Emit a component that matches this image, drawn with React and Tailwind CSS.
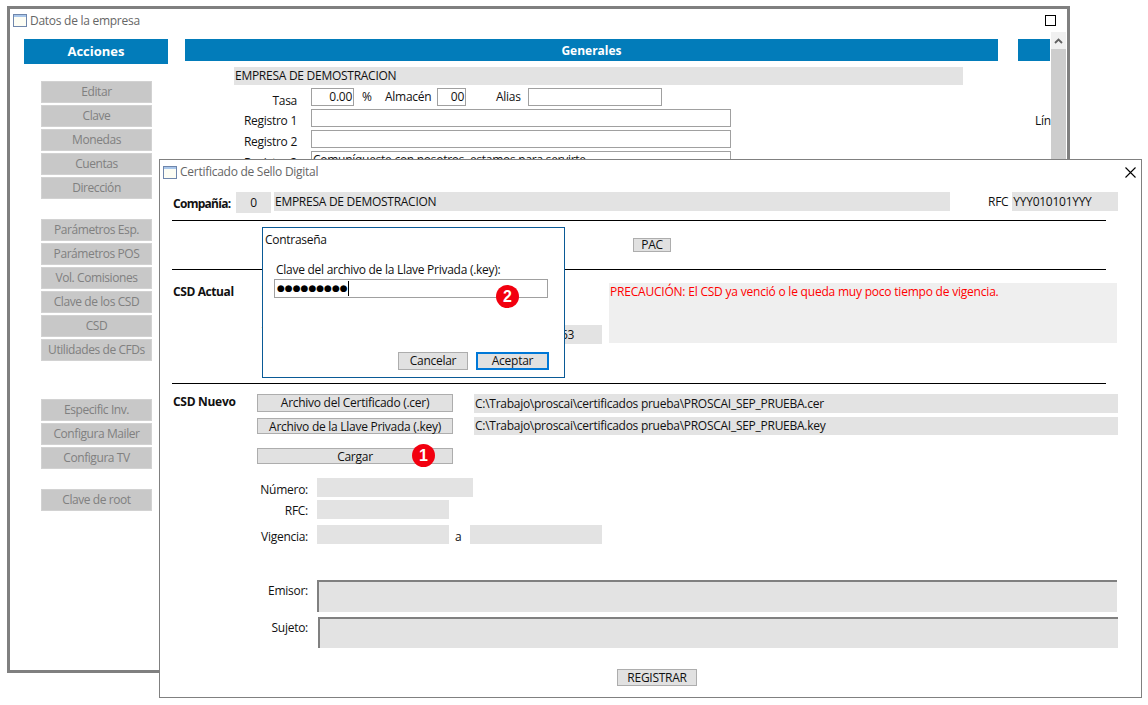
// App.jsx
import React from "react";

const ACTIONS = [
	{ label: "Editar", top: "mt-[10px]" },
	{ label: "Clave", top: "mt-[2px]" },
	{ label: "Monedas", top: "mt-[2px]" },
	{ label: "Cuentas", top: "mt-[2px]" },
	{ label: "Dirección", top: "mt-[2px]" },
	{ label: "Parámetros Esp.", top: "mt-[20px]" },
	{ label: "Parámetros POS", top: "mt-[2px]" },
	{ label: "Vol. Comisiones", top: "mt-[2px]" },
	{ label: "Clave de los CSD", top: "mt-[2px]" },
	{ label: "CSD", top: "mt-[2px]" },
	{ label: "Utilidades de CFDs", top: "mt-[2px]" },
	{ label: "Especific Inv.", top: "mt-[38px]" },
	{ label: "Configura Mailer", top: "mt-[2px]" },
	{ label: "Configura TV", top: "mt-[2px]" },
	{ label: "Clave de root", top: "mt-[20px]" },
];

function WinIcon() {
	return (
		<span className="block w-[14px] h-[13px] shrink-0 border border-[#6f86ab] bg-[#fdfdf4]">
			<span className="block h-[2px] bg-[#a9c6ea]" />
		</span>
	);
}

function Badge({ n, className }) {
	return (
		<span
			className={
				"absolute w-[23px] h-[23px] rounded-full bg-[#f2000f] text-white flex items-center justify-center font-['Liberation_Sans',sans-serif] font-bold text-[16px] leading-none tracking-normal " +
				className
			}
		>
			{n}
		</span>
	);
}

function GrayButton({ className, children }) {
	return (
		<div
			className={
				"flex items-center justify-center bg-[#e1e1e1] border border-[#adadad] text-[#111] leading-none " +
				className
			}
		>
			{children}
		</div>
	);
}

function Label({ className, children }) {
	return <div className={"text-right text-[#111] leading-none " + className}>{children}</div>;
}

export default function App() {
	return (
		<div className="relative w-[1148px] h-[705px] overflow-hidden bg-white text-[12px] font-['Open_Sans',sans-serif] tracking-[-0.27px]">
			{/* ventana de atras */}
			<div className="absolute left-[7px] top-[6px] w-[1063px] h-[667px] border-[3px] border-[#808080] bg-white overflow-hidden">
				<div className="h-[23px] flex items-center pl-[3px] pr-[11px] text-[#666]">
					<WinIcon />
					<span className="ml-[3px]">Datos de la empresa</span>
					<span className="ml-auto w-[11px] h-[11px] border border-black" />
				</div>
				<div className="flex">
					<div className="ml-[14px] w-[144px] mt-[7px]">
						<div className="h-[25px] bg-[#027cba] text-white font-bold text-[13px] flex items-center justify-center tracking-normal">
							Acciones
						</div>
						<div className="ml-[17px] w-[111px] mt-[7px] flex flex-col tracking-[-0.42px]">
							{ACTIONS.map((a) => (
								<div
									key={a.label}
									className={
										"h-[22px] bg-[#c8c8c8] border border-[#d2d2d2] text-[#808080] flex items-center justify-center whitespace-nowrap " +
										a.top
									}
								>
									{a.label}
								</div>
							))}
						</div>
					</div>

					<div className="ml-[17px] w-[813px] mt-[7px]">
						<div className="h-[22px] pt-[2px] bg-[#027cba] text-white font-bold text-[12px] flex items-center justify-center tracking-normal">
							Generales
						</div>
						<div className="mt-[6px] ml-[49px] w-[729px] h-[18px] bg-[#e3e3e3] text-[#111] flex items-center pl-[1px]">
							EMPRESA DE DEMOSTRACION
						</div>
						<div className="mt-[3px] flex items-center h-[18px] text-[#111]">
							<Label className="w-[112px] pt-[7px]">Tasa</Label>
							<div className="ml-[14px] w-[43px] h-[18px] border border-[#a0a0a0] flex items-center justify-end pr-[1px]">0.00</div>
							<span className="ml-[8px] w-[23px]">%</span>
							<span className="w-[47px]">Almacén</span>
							<div className="ml-[5px] w-[29px] h-[18px] border border-[#a0a0a0] flex items-center justify-end pr-[1px]">00</div>
							<span className="ml-[30px] w-[26px]">Alias</span>
							<div className="ml-[6px] w-[134px] h-[18px] border border-[#a0a0a0]" />
						</div>
						<div className="mt-[3px] flex items-center h-[18px]">
							<Label className="w-[112px] pt-[6px]">Registro 1</Label>
							<div className="ml-[14px] w-[420px] h-[18px] border border-[#a0a0a0]" />
						</div>
						<div className="mt-[3px] flex items-center h-[18px]">
							<Label className="w-[112px] pt-[6px]">Registro 2</Label>
							<div className="ml-[14px] w-[420px] h-[18px] border border-[#a0a0a0]" />
						</div>
						<div className="mt-[3px] flex items-center h-[18px]">
							<Label className="w-[112px] pt-[6px]">Registro 3</Label>
							<div className="ml-[14px] w-[420px] h-[18px] border border-[#a0a0a0] flex items-center pl-[1px] text-[#111]">
								Comuníqueste con nosotros, estamos para servirte
							</div>
						</div>
					</div>

					<div className="ml-[20px] w-[32px] mt-[7px]">
						<div className="h-[22px] bg-[#027cba]" />
						<div className="mt-[51px] text-[#111] pl-[17px] whitespace-nowrap">Lín</div>
					</div>

					<div className="ml-[1px] w-[15px] h-[640px] bg-[#cdcdcd]">
						<div className="h-[17px] bg-[#f0f0f0] flex items-center justify-center">
							<svg width="9" height="6" viewBox="0 0 9 6" fill="none">
								<path d="M1 5 L4.5 1.5 L8 5" stroke="#606060" strokeWidth="1.8" />
							</svg>
						</div>
					</div>
				</div>
			</div>

			{/* certificado */}
			<div className="absolute left-[159px] top-[159px] w-[983px] h-[539px] border border-[#808080] bg-white">
				<div className="h-[24px] flex items-center pl-[3px] pr-[5px] text-[#666]">
					<WinIcon />
					<span className="ml-[3px]">Certificado de Sello Digital</span>
					<svg className="ml-auto" width="11" height="11" viewBox="0 0 11 11" fill="none">
						<path d="M0.5 0.5 L10.5 10.5 M10.5 0.5 L0.5 10.5" stroke="#000" strokeWidth="1.1" />
					</svg>
				</div>

				<div className="mt-[8px] flex items-start h-[21px] text-[#111]">
					<div className="ml-[13px] w-[63px] font-bold h-[21px] pt-[2px] flex items-center tracking-[-0.72px]">Compañía:</div>
					<div className="w-[35px] h-[21px] bg-[#e3e3e3] flex items-center justify-center">0</div>
					<div className="ml-[3px] w-[676px] h-[19px] bg-[#e3e3e3] flex items-center pl-[1px]">EMPRESA DE DEMOSTRACION</div>
					<div className="ml-[38px] h-[19px] flex items-center">RFC</div>
					<div className="ml-[4px] w-[106px] h-[19px] bg-[#e3e3e3] flex items-center pl-[1px]">YYY010101YYY</div>
				</div>
				<div className="mt-[7px] ml-[12px] w-[934px] h-[1px] bg-black" />

				<div className="mt-[17px] ml-[473px]">
					<GrayButton className="w-[38px] h-[14px]">PAC</GrayButton>
				</div>
				<div className="mt-[17px] ml-[12px] w-[934px] h-[1px] bg-black" />

				<div className="h-[113px] flex text-[#111]">
					<div className="ml-[13px] mt-[16px] w-[87px] font-bold leading-none tracking-[-0.4px]">CSD Actual</div>
					<div className="w-[49px] mt-[15px] flex flex-col">
						<Label>Número:</Label>
						<Label className="mt-[29px]">Vigencia:</Label>
					</div>
					<div className="ml-[161px] mt-[55px] w-[132px] h-[19px] bg-[#e3e3e3] flex items-center pl-[91px]">63</div>
					<div className="ml-[7px] mt-[13px] w-[508px] h-[60px] bg-[#efefef] text-[#f00] pl-[1px] pt-[2px] leading-[14px] tracking-[-0.21px]">
						PRECAUCIÓN: El CSD ya venció o le queda muy poco tiempo de vigencia.
					</div>
				</div>
				<div className="ml-[12px] w-[934px] h-[1px] bg-black" />

				<div className="mt-[10px] flex items-start text-[#111]">
					<div className="ml-[13px] mt-[1px] w-[84px] font-bold leading-[14px] tracking-[-0.3px]">CSD Nuevo</div>
					<div className="w-[196px]">
						<GrayButton className="h-[18px]">Archivo del Certificado (.cer)</GrayButton>
						<GrayButton className="mt-[6px] h-[16px] pt-[1px]">Archivo de la Llave Privada (.key)</GrayButton>
						<GrayButton className="mt-[14px] h-[16px] pt-[1px]">Cargar</GrayButton>
					</div>
					<div className="ml-[21px] w-[644px]">
						<div className="h-[19px] bg-[#e3e3e3] flex items-center pl-[1px]">C:\Trabajo\proscai\certificados prueba\PROSCAI_SEP_PRUEBA.cer</div>
						<div className="mt-[4px] h-[18px] bg-[#e3e3e3] flex items-center pl-[1px]">C:\Trabajo\proscai\certificados prueba\PROSCAI_SEP_PRUEBA.key</div>
					</div>
				</div>

				<div className="mt-[14px] flex items-center h-[19px] text-[#111]">
					<Label className="w-[148px] pt-[4px]">Número:</Label>
					<div className="ml-[9px] w-[156px] h-[19px] bg-[#e3e3e3]" />
				</div>
				<div className="mt-[3px] flex items-center h-[19px] text-[#111]">
					<Label className="w-[148px] pt-[2px]">RFC:</Label>
					<div className="ml-[9px] w-[132px] h-[19px] bg-[#e3e3e3]" />
				</div>
				<div className="mt-[6px] flex items-center h-[19px] text-[#111]">
					<Label className="w-[148px] pt-[4px]">Vigencia:</Label>
					<div className="ml-[9px] w-[132px] h-[19px] bg-[#e3e3e3]" />
					<span className="ml-[6px] w-[15px] pt-[4px]">a</span>
					<div className="w-[132px] h-[19px] bg-[#e3e3e3]" />
				</div>

				<div className="mt-[36px] flex items-start text-[#111]">
					<Label className="w-[148px] mt-[5px]">Emisor:</Label>
					<div className="ml-[9px] w-[800px] h-[32px] bg-[#e3e3e3] border-t-2 border-l-2 border-[#808080]" />
				</div>
				<div className="mt-[5px] flex items-start text-[#111]">
					<Label className="w-[148px] mt-[5px]">Sujeto:</Label>
					<div className="ml-[10px] w-[800px] h-[31px] bg-[#e3e3e3] border-t-2 border-l-2 border-[#808080]" />
				</div>

				<div className="mt-[21px] ml-[457px]">
					<GrayButton className="w-[80px] h-[17px]">REGISTRAR</GrayButton>
				</div>
			</div>

			{/* contraseña */}
			<div className="absolute left-[262px] top-[227px] w-[303px] h-[151px] border border-[#0a5a96] bg-white text-[#111]">
				<div className="ml-[2px] mt-[5px] leading-[14px]">Contraseña</div>
				<div className="ml-[13px] mt-[16px] leading-[14px]">Clave del archivo de la Llave Privada (.key):</div>
				<div className="ml-[11px] mt-[2px] w-[274px] h-[19px] border border-[#a0a0a0] flex items-center pl-[2px]">
					<span className="font-['DejaVu_Sans',sans-serif] text-[9px] leading-none tracking-normal border-r border-black text-black h-[15px] flex items-center">
						●●●●●●●●●
					</span>
				</div>
				<div className="mt-[54px] ml-[135px] flex gap-[8px]">
					<GrayButton className="w-[70px] h-[18px]">Cancelar</GrayButton>
					<GrayButton className="w-[73px] h-[18px] !border-2 !border-[#0078d7]">Aceptar</GrayButton>
				</div>
			</div>

			<Badge n="1" className="left-[412px] top-[444px]" />
			<Badge n="2" className="left-[496px] top-[285px]" />
		</div>
	);
}
